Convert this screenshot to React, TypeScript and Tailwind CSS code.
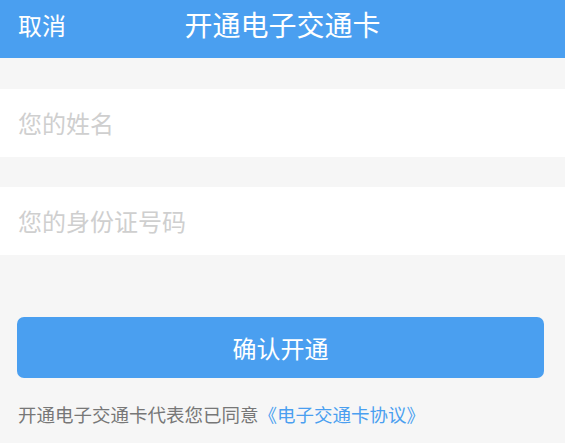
import React from "react";

const font = {
  fontFamily: '"Noto Sans CJK SC", "Noto Sans", sans-serif',
};

export default function App() {
  return (
    <div className="w-[565px] h-[443px] bg-[#f6f6f6] overflow-hidden" style={font}>
      <div className="relative h-[58px] bg-[#4a9ff0] flex items-center justify-center pb-[10px]">
        <span className="absolute left-[18px] top-[7px] text-[24px] text-white">取消</span>
        <h1 className="text-[28px] leading-none text-white">开通电子交通卡</h1>
      </div>

      <div className="pt-[31px]">
        <div className="h-[68px] bg-white flex items-center px-[18px]">
          <input
            placeholder="您的姓名"
            className="w-full text-[24px] outline-none placeholder:text-[#cfcfcf] bg-transparent"
          />
        </div>
        <div className="h-[30px]" />
        <div className="h-[68px] bg-white flex items-center px-[18px]">
          <input
            placeholder="您的身份证号码"
            className="w-full text-[24px] outline-none placeholder:text-[#cfcfcf] bg-transparent"
          />
        </div>
      </div>

      <div className="pl-[17px] pr-[21px] pt-[62px]">
        <button className="w-full h-[61px] rounded-[7px] bg-[#4a9ff0] text-white text-[24px]">
          确认开通
        </button>
        <p className="mt-[23px] pl-[1px] text-[18.5px] text-[#777]">
          开通电子交通卡代表您已同意
          <span className="text-[#4a9ff0]">《电子交通卡协议》</span>
        </p>
      </div>
    </div>
  );
}
